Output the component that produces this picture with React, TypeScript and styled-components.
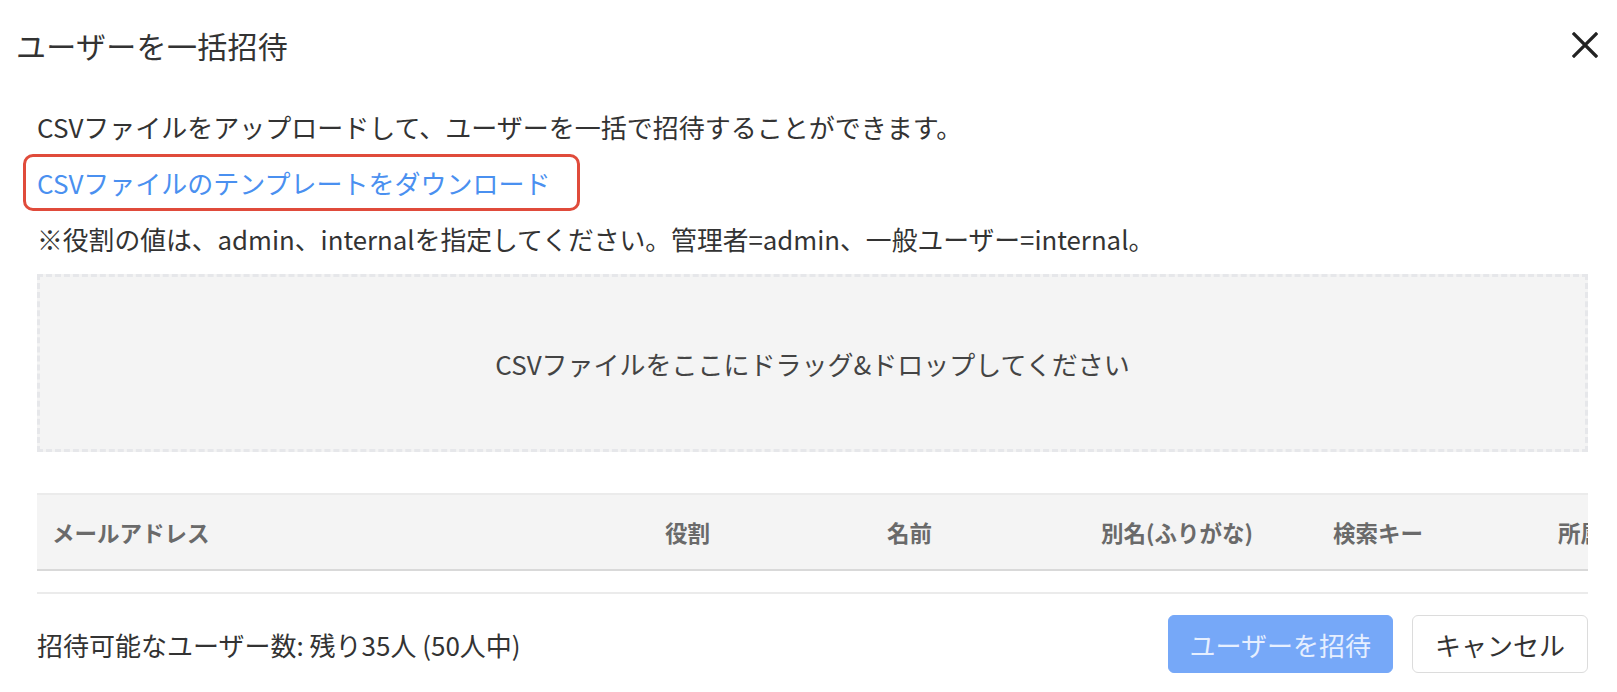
import styled, { createGlobalStyle } from "styled-components"

// Global //

const GlobalStyle = createGlobalStyle`
	html, body {
		margin: 0;
		padding: 0;
		background: #ffffff;
	}
	body {
		font-family: "Noto Sans CJK JP", "Noto Sans", sans-serif;
		color: #333333;
	}
	* {
		box-sizing: border-box;
	}
`

// Data //

const columns = [
	{ label: "メールアドレス", width: 613 },
	{ label: "役割", width: 222 },
	{ label: "名前", width: 214 },
	{ label: "別名(ふりがな)", width: 232 },
	{ label: "検索キー", width: 225 },
	{ label: "所属", width: 220 }
]

// Components //

export default function App() {
	return (
		<>
			<GlobalStyle />
			<Modal>
				<Header>
					<Title>ユーザーを一括招待</Title>
					<CloseButton aria-label="閉じる">
						<svg width="26" height="26" viewBox="0 0 26 26">
							<path d="M2 2 L24 24 M24 2 L2 24" stroke="#222" strokeWidth="3.2" strokeLinecap="square" />
						</svg>
					</CloseButton>
				</Header>
				<Body>
					<Description>CSVファイルをアップロードして、ユーザーを一括で招待することができます。</Description>
					<LinkFrame>
						<TemplateLink href="#">CSVファイルのテンプレートをダウンロード</TemplateLink>
					</LinkFrame>
					<Note>※役割の値は、admin、internalを指定してください。管理者=admin、一般ユーザー=internal。</Note>
					<DropZone>CSVファイルをここにドラッグ&ドロップしてください</DropZone>
					<TableScroll>
						<Table>
							<colgroup>
								{columns.map((c) => (
									<col key={c.label} style={{ width: c.width }} />
								))}
							</colgroup>
							<thead>
								<tr>
									{columns.map((c) => (
										<HeadCell key={c.label}>{c.label}</HeadCell>
									))}
								</tr>
							</thead>
							<tbody>
								<tr>
									<EmptyCell colSpan={columns.length} />
								</tr>
							</tbody>
						</Table>
					</TableScroll>
					<Footer>
						<Remaining>招待可能なユーザー数: 残り35人 (50人中)</Remaining>
						<Actions>
							<Button $primary disabled>
								ユーザーを招待
							</Button>
							<Button>キャンセル</Button>
						</Actions>
					</Footer>
				</Body>
			</Modal>
		</>
	)
}

// Styled Components //

const Modal = styled.div`
	width: 1617px;
	height: 692px;
	background: #ffffff;
	display: flex;
	flex-direction: column;
	overflow: hidden;
`

const Header = styled.header`
	height: 90px;
	display: flex;
	align-items: center;
	justify-content: space-between;
	padding: 0 19px 0 16px;
`

const Title = styled.h2`
	margin: 0;
	font-size: 30px;
	font-weight: 400;
	color: #333333;
	letter-spacing: 0.3px;
`

const CloseButton = styled.button`
	width: 26px;
	height: 26px;
	padding: 0;
	border: none;
	background: none;
	display: flex;
	align-items: center;
	justify-content: center;
	cursor: pointer;
`

const Body = styled.div`
	display: flex;
	flex-direction: column;
	align-items: flex-start;
	padding: 19px 29px 0 37px;
`

const Description = styled.p`
	margin: 0;
	font-size: 26px;
	line-height: 36px;
	color: #333333;
`

const LinkFrame = styled.div`
	margin: 9px 0 0 -14px;
	padding: 7px 26px 7px 11px;
	border: 3px solid #e04b3b;
	border-radius: 10px;
`

const TemplateLink = styled.a`
	display: block;
	font-size: 26px;
	line-height: 37px;
	color: #4a90f0;
	text-decoration: none;
`

const Note = styled.p`
	margin: 10px 0 0;
	font-size: 25.8px;
	line-height: 36px;
	color: #333333;
`

const DropZone = styled.div`
	margin-top: 17px;
	width: 100%;
	height: 178px;
	display: flex;
	align-items: center;
	justify-content: center;
	background: #f4f4f4;
	border: 3px dashed #e6e7ea;
	font-size: 26px;
	color: #444444;
`

const TableScroll = styled.div`
	margin-top: 41px;
	width: 100%;
	overflow: hidden;
`

const Table = styled.table`
	width: 1726px;
	table-layout: fixed;
	border-collapse: collapse;
`

const HeadCell = styled.th`
	height: 76px;
	padding: 0 0 0 15px;
	text-align: left;
	font-size: 22.5px;
	font-weight: 700;
	color: #6a6a6a;
	background: #f4f4f4;
	border-top: 2px solid #ebebeb;
	border-bottom: 2px solid #d9d9d9;
	white-space: nowrap;
`

const EmptyCell = styled.td`
	height: 23px;
	padding: 0;
	border-bottom: 2px solid #ebebeb;
`

const Footer = styled.footer`
	margin-top: 21px;
	width: 100%;
	display: flex;
	align-items: center;
	justify-content: space-between;
`

const Remaining = styled.span`
	font-size: 26px;
	color: #333333;
`

const Actions = styled.div`
	display: flex;
	gap: 19px;
`

const Button = styled.button<{ $primary?: boolean }>`
	height: 58px;
	padding: 0 ${({ $primary }) => ($primary ? "21px" : "22px")};
	border-radius: 6px;
	font-family: "Noto Sans CJK JP", "Noto Sans", sans-serif;
	font-size: 26px;
	border: 1px solid ${({ $primary }) => ($primary ? "#76a8f8" : "#dcdcdc")};
	background: ${({ $primary }) => ($primary ? "#76a8f8" : "#ffffff")};
	color: ${({ $primary }) => ($primary ? "#e6efff" : "#333333")};
	cursor: ${({ $primary }) => ($primary ? "not-allowed" : "pointer")};
`
